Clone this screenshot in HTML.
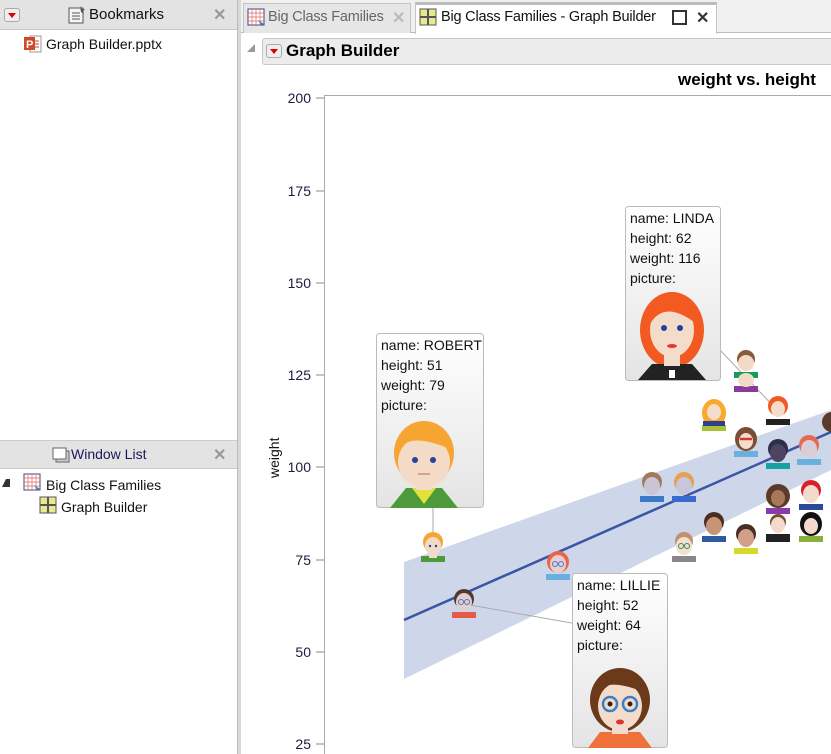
<!DOCTYPE html>
<html><head><meta charset="utf-8"><style>
*{margin:0;padding:0;box-sizing:border-box}
body{width:831px;height:754px;overflow:hidden;background:#fff;font-family:"Liberation Sans",sans-serif;position:relative}
.abs{position:absolute}
.hdr{background:#e3e3e3;border-bottom:1px solid #c8c8c8}
.t{font-size:14px;color:#111;white-space:nowrap}
.dd{position:absolute;width:16px;height:14px;border:1px solid #aaa;border-radius:3px;background:#eee}
.dd:after{content:"";position:absolute;left:3px;top:4px;border-left:4px solid transparent;border-right:4px solid transparent;border-top:5px solid #d00}
.x{color:#999;font-size:16px;font-weight:bold}
</style></head><body>
<div class="abs hdr" style="left:0;top:0;width:237px;height:30px"></div>
<div class="dd" style="left:4px;top:8px"></div>
<svg class="abs" style="left:68px;top:5px" width="20" height="20"><rect x="1" y="3" width="14" height="15" fill="#f4f4f4" stroke="#555"/><path d="M4 8h8M4 11h8M4 14h8" stroke="#555"/><path d="M12 1l2 3 3 0-2 2 1 3-3-2" fill="#555"/></svg>
<div class="abs t" style="left:89px;top:6px;font-size:15px">Bookmarks</div>
<div class="abs x" style="left:213px;top:5px">✕</div>
<svg class="abs" style="left:23px;top:34px" width="20" height="20"><rect x="7" y="2" width="11" height="16" fill="#fff" stroke="#999"/><path d="M10 7h6M10 10h6M10 13h6" stroke="#c44"/><rect x="1" y="3" width="11" height="13" fill="#d24726"/><text x="3" y="14" font-size="11" fill="#fff" font-weight="bold" font-family="Liberation Sans">P</text></svg>
<div class="abs t" style="left:46px;top:36px">Graph Builder.pptx</div>

<div class="abs hdr" style="left:0;top:440px;width:237px;height:29px;border-top:1px solid #ccc"></div>
<svg class="abs" style="left:51px;top:445px" width="20" height="20"><rect x="5" y="6" width="13" height="11" fill="#ccc" stroke="#666"/><rect x="2" y="3" width="13" height="11" fill="#fff" stroke="#666"/></svg>
<div class="abs t" style="left:71px;top:446px;color:#1a1a5a">Window List</div>
<div class="abs x" style="left:213px;top:445px">✕</div>
<div class="abs" style="left:2px;top:479px;border-left:4px solid transparent;border-right:4px solid #333;border-bottom:8px solid #333;width:0"></div>
<svg class="abs" style="left:23px;top:473px" width="20" height="20"><rect x="1" y="1" width="16" height="16" fill="#fff" stroke="#447"/><path d="M1 5h16M1 9h16M1 13h16M5 1v16M9 1v16M13 1v16" stroke="#d66" stroke-width=".7"/><path d="M11 12l6 4-3 1z" fill="#38c"/></svg>
<div class="abs t" style="left:46px;top:477px">Big Class Families</div>
<svg class="abs" style="left:39px;top:496px" width="18" height="18"><rect x="1" y="1" width="16" height="16" fill="#e8e890" stroke="#555"/><path d="M9 1v16M1 9h16" stroke="#555" stroke-width="2"/></svg>
<div class="abs t" style="left:61px;top:499px">Graph Builder</div>

<div class="abs" style="left:237px;top:0;width:4px;height:754px;background:#d9d9d9;border-left:1px solid #bbb"></div>

<div class="abs" style="left:241px;top:0;width:590px;height:33px;background:#f0f0f0;border-bottom:1px solid #bbb"></div>
<div class="abs" style="left:243px;top:3px;width:168px;height:30px;background:#e6e6e6;border:1px solid #c4c4c4;border-bottom:none"></div>
<svg class="abs" style="left:247px;top:8px" width="20" height="20"><rect x="1" y="1" width="16" height="16" fill="#fff" stroke="#447"/><path d="M1 5h16M1 9h16M1 13h16M5 1v16M9 1v16M13 1v16" stroke="#d66" stroke-width=".7"/><path d="M11 12l6 4-3 1z" fill="#38c"/></svg>
<div class="abs t" style="left:268px;top:9px;color:#666;font-size:14.5px;letter-spacing:-0.2px">Big Class Families</div>
<div class="abs x" style="left:392px;top:8px;color:#bbb">✕</div>
<div class="abs" style="left:415px;top:2px;width:302px;height:32px;background:#fff;border:1px solid #c4c4c4;border-top:3px solid #bcbcbc;border-bottom:none"></div>
<svg class="abs" style="left:419px;top:8px" width="18" height="18"><rect x="1" y="1" width="16" height="16" fill="#e8e890" stroke="#555"/><path d="M9 1v16M1 9h16" stroke="#555" stroke-width="2"/></svg>
<div class="abs t" style="left:441px;top:9px;font-size:14.5px;letter-spacing:-0.2px">Big Class Families - Graph Builder</div>
<div class="abs" style="left:672px;top:10px;width:15px;height:15px;border:2px solid #333"></div>
<div class="abs x" style="left:696px;top:8px;color:#333">✕</div>

<div class="abs" style="left:247px;top:44px;border-left:8px solid transparent;border-bottom:8px solid #999;width:0"></div>
<div class="abs" style="left:262px;top:38px;width:580px;height:27px;background:#ececec;border:1px solid #c8c8c8;border-radius:3px"></div>
<div class="dd" style="left:266px;top:44px"></div>
<div class="abs" style="left:286px;top:41px;font-size:17px;font-weight:bold">Graph Builder</div>
<div class="abs" style="left:678px;top:70px;font-size:17px;font-weight:bold">weight vs. height</div>

<svg class="abs" style="left:241px;top:66px" width="590" height="688" viewBox="241 66 590 688" font-family="Liberation Sans">
<rect x="324.5" y="95.5" width="520" height="680" fill="#fff" stroke="#aaa"/>
<g fill="#1c1c3c" font-size="14" text-anchor="end">
<text x="311" y="103">200</text><text x="311" y="196">175</text><text x="311" y="288">150</text><text x="311" y="380">125</text><text x="311" y="472">100</text><text x="311" y="565">75</text><text x="311" y="657">50</text><text x="311" y="749">25</text>
</g>
<g stroke="#888"><path d="M316 98h8M316 191h8M316 283h8M316 375h8M316 467h8M316 560h8M316 652h8M316 744h8"/></g>
<text transform="translate(279,478) rotate(-90)" font-size="14" fill="#111">weight</text>
<path d="M404 562 L831 410 L831 470 L404 679Z" fill="#c5cfe6" opacity=".85"/>
<path d="M404 620 L831 432" stroke="#3a55a5" stroke-width="2.5"/>
<path d="M433 508 V545 M668 640 L470 605 M720 350 L777 410" stroke="#aaa" stroke-width="1"/>
<g>
<g transform="translate(419,530)"><circle cx="14" cy="12" r="10" fill="#f7a531"/><rect x="2" y="26" width="24" height="6" fill="#4c9a3a"/><rect x="10" y="20" width="8" height="8" fill="#f3dbc8"/><ellipse cx="14" cy="16" rx="8" ry="9" fill="#f3dbc8"/><path d="M5 13Q8 3 23 9L22 6Q13 0 5 9Z" fill="#f7a531"/><circle cx="11" cy="16" r="1.2" fill="#249"/><circle cx="17" cy="16" r="1.2" fill="#249"/></g>
<g transform="translate(544,548)"><circle cx="14" cy="14" r="11" fill="#e9664a"/><rect x="2" y="26" width="24" height="6" fill="#6ab0de"/><ellipse cx="14" cy="16" rx="8" ry="9" fill="#e7cfd0"/><circle cx="11" cy="16" r="2.5" fill="none" stroke="#47c"/><circle cx="17" cy="16" r="2.5" fill="none" stroke="#47c"/></g>
<g transform="translate(450,586)"><circle cx="14" cy="13" r="10" fill="#4d3a35"/><rect x="2" y="26" width="24" height="6" fill="#e55b4a"/><ellipse cx="14" cy="16" rx="8" ry="9" fill="#e7cdc8"/><circle cx="11" cy="16" r="2.5" fill="none" stroke="#47c"/><circle cx="17" cy="16" r="2.5" fill="none" stroke="#47c"/></g>
<g transform="translate(732,348)"><circle cx="14" cy="11" r="9" fill="#8a5a3c"/><rect x="2" y="24" width="24" height="6" fill="#1a9a5a"/><ellipse cx="14" cy="15" rx="8" ry="8" fill="#f2dac6"/></g>
<g transform="translate(732,372)"><rect x="2" y="14" width="24" height="6" fill="#8a3a9a"/><ellipse cx="14" cy="8" rx="8" ry="7" fill="#f2dac6"/></g>
<g transform="translate(764,393)"><circle cx="14" cy="13" r="10" fill="#f25a22"/><rect x="2" y="26" width="24" height="6" fill="#222"/><ellipse cx="14" cy="16" rx="7" ry="8" fill="#f3dcc9"/></g>
<g transform="translate(700,397)"><ellipse cx="14" cy="16" rx="12" ry="14" fill="#f9a92c"/><rect x="2" y="28" width="24" height="6" fill="#a7c23a"/><rect x="3" y="24" width="22" height="5" fill="#2e3f8e"/><ellipse cx="14" cy="15" rx="7" ry="8" fill="#f4dccb"/></g>
<g transform="translate(732,425)"><ellipse cx="14" cy="14" rx="11" ry="12" fill="#7a4d35"/><rect x="2" y="26" width="24" height="6" fill="#6ab0de"/><ellipse cx="14" cy="16" rx="7" ry="8" fill="#f3dccc"/><path d="M8 14h12" stroke="#d33" stroke-width="2.5"/></g>
<g transform="translate(764,437)"><circle cx="14" cy="12" r="10" fill="#2c2e4a"/><rect x="2" y="26" width="24" height="6" fill="#17a2a2"/><ellipse cx="14" cy="16" rx="8" ry="9" fill="#4d4462"/></g>
<g transform="translate(795,433)"><circle cx="14" cy="12" r="10" fill="#e56b50"/><rect x="2" y="26" width="24" height="6" fill="#6ab0de"/><ellipse cx="14" cy="16" rx="8" ry="9" fill="#d9cdd8"/></g>
<g transform="translate(638,470)"><circle cx="14" cy="12" r="10" fill="#a07a5a"/><rect x="2" y="26" width="24" height="6" fill="#3a7ac8"/><ellipse cx="14" cy="16" rx="8" ry="9" fill="#cac4d4"/></g>
<g transform="translate(670,470)"><circle cx="14" cy="12" r="10" fill="#e6a050"/><rect x="2" y="26" width="24" height="6" fill="#3a6ad0"/><ellipse cx="14" cy="16" rx="8" ry="9" fill="#c9c5da"/></g>
<g transform="translate(764,482)"><ellipse cx="14" cy="14" rx="12" ry="12" fill="#5a3a28"/><rect x="2" y="26" width="24" height="6" fill="#8a3aaa"/><ellipse cx="14" cy="16" rx="7" ry="8" fill="#a8785a"/></g>
<g transform="translate(797,478)"><circle cx="14" cy="12" r="10" fill="#d8202a"/><rect x="2" y="26" width="24" height="6" fill="#2a4a9a"/><ellipse cx="14" cy="16" rx="8" ry="9" fill="#f2dacc"/></g>
<g transform="translate(764,512)"><circle cx="14" cy="10" r="8" fill="#7a4d35"/><rect x="2" y="22" width="24" height="8" fill="#222"/><ellipse cx="14" cy="13" rx="7" ry="8" fill="#f2dacc"/></g>
<g transform="translate(797,510)"><ellipse cx="14" cy="14" rx="11" ry="12" fill="#111"/><rect x="2" y="26" width="24" height="6" fill="#8ab03a"/><ellipse cx="14" cy="16" rx="7" ry="8" fill="#f2dacc"/></g>
<g transform="translate(700,510)"><circle cx="14" cy="12" r="10" fill="#4a2e22"/><rect x="2" y="26" width="24" height="6" fill="#2e5aa0"/><ellipse cx="14" cy="16" rx="8" ry="9" fill="#c89478"/></g>
<g transform="translate(732,522)"><circle cx="14" cy="12" r="10" fill="#4a2e22"/><rect x="2" y="26" width="24" height="6" fill="#d8d82a"/><ellipse cx="14" cy="16" rx="8" ry="9" fill="#d0a088"/></g>
<g transform="translate(670,530)"><circle cx="14" cy="11" r="9" fill="#c09070"/><rect x="2" y="26" width="24" height="6" fill="#888"/><ellipse cx="14" cy="16" rx="8" ry="9" fill="#f2e0d0"/><circle cx="11" cy="16" r="2.5" fill="none" stroke="#3a8a4a"/><circle cx="17" cy="16" r="2.5" fill="none" stroke="#3a8a4a"/></g>
<g transform="translate(818,410)"><circle cx="14" cy="12" r="10" fill="#5a3a28"/></g>
</g>
<defs><linearGradient id="g" x1="0" y1="0" x2="0" y2="1"><stop offset="0" stop-color="#fff"/><stop offset="1" stop-color="#e4e4e4"/></linearGradient></defs>
<rect x="376.5" y="333.5" width="107" height="174" rx="3" fill="url(#g)" stroke="#bbb"/>
<g font-size="14" fill="#111"><text x="381" y="350">name: ROBERT</text><text x="381" y="370">height: 51</text><text x="381" y="390">weight: 79</text><text x="381" y="410">picture:</text></g>
<g transform="translate(386,418)"><ellipse cx="38" cy="35" rx="30" ry="32" fill="#f7a531"/><path d="M4 90 L20 70 H56 L72 90Z" fill="#4c9a3a"/><path d="M26 70 L38 86 L50 70Z" fill="#e3e03a"/><rect x="30" y="58" width="16" height="14" fill="#f3dbc8"/><ellipse cx="38" cy="44" rx="26" ry="26" fill="#f3dbc8"/><path d="M10 45 Q12 8 66 32 L64 22 Q40 0 12 25Z" fill="#f7a531"/><circle cx="29" cy="42" r="3" fill="#249"/><circle cx="47" cy="42" r="3" fill="#249"/><path d="M32 56 h12" stroke="#d9a090" stroke-width="2"/></g>

<rect x="625.5" y="206.5" width="95" height="174" rx="3" fill="url(#g)" stroke="#bbb"/>
<g font-size="14" fill="#111"><text x="630" y="223">name: LINDA</text><text x="630" y="243">height: 62</text><text x="630" y="263">weight: 116</text><text x="630" y="283">picture:</text></g>
<g transform="translate(634,290)"><ellipse cx="38" cy="40" rx="32" ry="38" fill="#f25a22"/><path d="M4 90 L18 74 H58 L72 90Z" fill="#222"/><rect x="35" y="80" width="6" height="8" fill="#fff"/><rect x="30" y="62" width="16" height="14" fill="#f3dcc9"/><ellipse cx="38" cy="40" rx="22" ry="27" fill="#f3dcc9"/><path d="M16 34 Q30 10 60 32 L58 18 Q38 2 18 20Z" fill="#f25a22"/><circle cx="30" cy="38" r="3" fill="#249"/><circle cx="46" cy="38" r="3" fill="#249"/><ellipse cx="38" cy="56" rx="5" ry="2" fill="#e33"/></g>

<rect x="572.5" y="573.5" width="95" height="174" rx="3" fill="url(#g)" stroke="#bbb"/>
<g font-size="14" fill="#111"><text x="577" y="590">name: LILLIE</text><text x="577" y="610">height: 52</text><text x="577" y="630">weight: 64</text><text x="577" y="650">picture:</text></g>
<g transform="translate(582,662)"><ellipse cx="38" cy="38" rx="30" ry="32" fill="#6a3a1a"/><path d="M6 86 L18 70 H58 L70 86Z" fill="#f0703a"/><rect x="30" y="58" width="16" height="14" fill="#f3dccc"/><ellipse cx="38" cy="44" rx="22" ry="24" fill="#f3dccc"/><path d="M14 38 Q16 12 62 30 L60 20 Q38 4 16 24Z" fill="#6a3a1a"/><circle cx="28" cy="42" r="7" fill="none" stroke="#3a80c8" stroke-width="2.5"/><circle cx="48" cy="42" r="7" fill="none" stroke="#3a80c8" stroke-width="2.5"/><circle cx="28" cy="42" r="2.5" fill="#3a2010"/><circle cx="48" cy="42" r="2.5" fill="#3a2010"/><ellipse cx="38" cy="60" rx="4" ry="2.5" fill="#d33"/></g>
</svg>
</body></html>
